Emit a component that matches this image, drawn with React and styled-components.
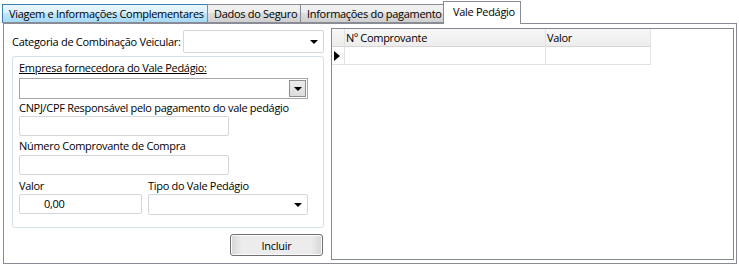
import styled, { createGlobalStyle } from "styled-components";

const GlobalStyle = createGlobalStyle`
  body {
    margin: 0;
    background: #ffffff;
    font-family: "Open Sans", "Noto Sans", sans-serif;
    font-size: 11px;
    letter-spacing: -0.3px;
    color: #000;
  }
`;

const Page = styled.div`
  width: 739px;
  height: 268px;
  padding: 1px 0 0 2px;
  box-sizing: border-box;
`;

const TabStrip = styled.div`
  display: flex;
  align-items: flex-end;
  height: 22px;
  position: relative;
  z-index: 1;
`;

const Tab = styled.div`
  box-sizing: border-box;
  width: ${(p) => p.w}px;
  height: ${(p) => (p.active ? 23 : 19)}px;
  margin-bottom: ${(p) => (p.active ? -1 : 0)}px;
  padding: ${(p) => (p.active ? "2px 0 0 9px" : "1px 0 0 6px")};
  border: 1px solid ${(p) => (p.hover ? "#3c7fb1" : "#898c95")};
  border-bottom: ${(p) => (p.active ? "none" : "1px solid #898c95")};
  background: ${(p) =>
    p.active
      ? "#ffffff"
      : p.hover
      ? "linear-gradient(#eaf6fd, #d9f0fc 50%, #bee6fd 50%, #a7d9f5)"
      : "linear-gradient(#f2f2f2, #ebebeb 50%, #dddddd 50%, #cfcfcf)"};
  margin-left: ${(p) => (p.first ? 0 : -1)}px;
  white-space: nowrap;
  line-height: 15px;
`;

const Panel = styled.div`
  box-sizing: border-box;
  width: 734px;
  height: 241px;
  margin-left: 1px;
  border: 1px solid #898c95;
  display: flex;
  padding: 3px 1px 0 8px;
  gap: 7px;
`;

const LeftCol = styled.div`
  width: 312px;
  display: flex;
  flex-direction: column;
  padding-top: 3px;
`;

const TopRow = styled.div`
  display: flex;
  align-items: center;
  justify-content: space-between;
  height: 23px;
  white-space: nowrap;
`;

const Combo = styled.div`
  box-sizing: border-box;
  width: ${(p) => p.w}px;
  height: ${(p) => p.h}px;
  border: 1px solid #d3d6db;
  border-radius: 2px;
  background: #fff;
  display: flex;
  align-items: center;
  justify-content: flex-end;
  padding-right: 5px;
`;

const Arrow = styled.span`
  width: 0;
  height: 0;
  border-left: 4px solid transparent;
  border-right: 4px solid transparent;
  border-top: 4px solid #000;
`;

const GroupBox = styled.div`
  box-sizing: border-box;
  margin-top: 3px;
  height: 172px;
  border: 1px solid #d5dfe5;
  border-radius: 3px;
  padding: 4px 0 0 6px;
  display: flex;
  flex-direction: column;
`;

const Label = styled.div`
  line-height: 14px;
  height: 14px;
  margin-top: ${(p) => p.mt || 0}px;
  margin-bottom: ${(p) => p.mb || 0}px;
  text-decoration: ${(p) => (p.underline ? "underline" : "none")};
  white-space: nowrap;
`;

const DropBox = styled.div`
  box-sizing: border-box;
  width: 289px;
  height: 21px;
  border: 1px solid #a7a7a7;
  background: #fff;
  display: flex;
  justify-content: flex-end;
  align-items: center;
  padding-right: 1px;
`;

const DropButton = styled.div`
  box-sizing: border-box;
  width: 17px;
  height: 17px;
  border: 1px solid #8e8e8e;
  background: linear-gradient(#ececec, #dcdcdc);
  display: flex;
  align-items: center;
  justify-content: center;
  padding-top: 1px;
`;

const TextBox = styled.div`
  box-sizing: border-box;
  width: ${(p) => p.w}px;
  height: 20px;
  border: 1px solid #d3d6db;
  border-radius: 2px;
  background: #fff;
  padding-left: ${(p) => p.pl || 0}px;
  line-height: 18px;
`;

const SplitRow = styled.div`
  display: flex;
  gap: 6px;
  margin-top: 4px;
`;

const Column = styled.div`
  display: flex;
  flex-direction: column;
  width: ${(p) => p.w}px;
  gap: 1px;
`;

const ButtonRow = styled.div`
  display: flex;
  justify-content: flex-end;
  margin-top: 6px;
  padding-right: 1px;
`;

const Button = styled.button`
  box-sizing: border-box;
  width: 93px;
  height: 22px;
  border: 1px solid #707070;
  border-radius: 3px;
  background: linear-gradient(90deg, #d6d6d6, #ececec 12%, #ececec 88%, #d6d6d6);
  box-shadow: inset 0 0 0 1px #fbfbfb;
  font: inherit;
  letter-spacing: inherit;
  color: #000;
  padding: 0;
`;

const Grid = styled.div`
  box-sizing: border-box;
  width: 403px;
  height: 232px;
  margin-top: 1px;
  border: 1px solid #828790;
  background: #fff;
`;

const GridRow = styled.div`
  display: flex;
  height: 18px;
`;

const Cell = styled.div`
  box-sizing: border-box;
  width: ${(p) => p.w}px;
  height: 18px;
  border-right: 1px solid #e2e2e2;
  border-bottom: 1px solid ${(p) => (p.head ? "#d5d5d5" : "#e2e2e2")};
  background: ${(p) => (p.head ? "linear-gradient(#f7f7f7, #ededed)" : "#fff")};
  padding-left: 1px;
  line-height: 17px;
  display: flex;
  align-items: center;
`;

const RowPointer = styled.span`
  width: 0;
  height: 0;
  margin-left: 1px;
  border-top: 5px solid transparent;
  border-bottom: 5px solid transparent;
  border-left: 6px solid #000;
`;

export default function App() {
  return (
    <>
      <GlobalStyle />
      <Page>
        <TabStrip>
          <Tab w={206} first hover>
            Viagem e Informações Complementares
          </Tab>
          <Tab w={94}>Dados do Seguro</Tab>
          <Tab w={144}>Informações do pagamento</Tab>
          <Tab w={78} active>
            Vale Pedágio
          </Tab>
        </TabStrip>
        <Panel>
          <LeftCol>
            <TopRow>
              <span>Categoria de Combinação Veicular:</span>
              <Combo w={141} h={23}>
                <Arrow />
              </Combo>
            </TopRow>
            <GroupBox>
              <Label underline mb={3}>
                Empresa fornecedora do Vale Pedágio:
              </Label>
              <DropBox>
                <DropButton>
                  <Arrow />
                </DropButton>
              </DropBox>
              <Label mt={2} mb={1}>
                CNPJ/CPF Responsável pelo pagamento do vale pedágio
              </Label>
              <TextBox w={210} />
              <Label mt={3} mb={2}>
                Número Comprovante de Compra
              </Label>
              <TextBox w={210} />
              <SplitRow>
                <Column w={123}>
                  <Label>Valor</Label>
                  <TextBox w={123} pl={24}>
                    0,00
                  </TextBox>
                </Column>
                <Column w={160}>
                  <Label>Tipo do Vale Pedágio</Label>
                  <Combo w={160} h={21}>
                    <Arrow />
                  </Combo>
                </Column>
              </SplitRow>
            </GroupBox>
            <ButtonRow>
              <Button>Incluir</Button>
            </ButtonRow>
          </LeftCol>
          <Grid>
            <GridRow>
              <Cell w={13} head />
              <Cell w={201} head>
                Nº Comprovante
              </Cell>
              <Cell w={105} head>
                Valor
              </Cell>
            </GridRow>
            <GridRow>
              <Cell w={13}>
                <RowPointer />
              </Cell>
              <Cell w={201} />
              <Cell w={105} />
            </GridRow>
          </Grid>
        </Panel>
      </Page>
    </>
  );
}
